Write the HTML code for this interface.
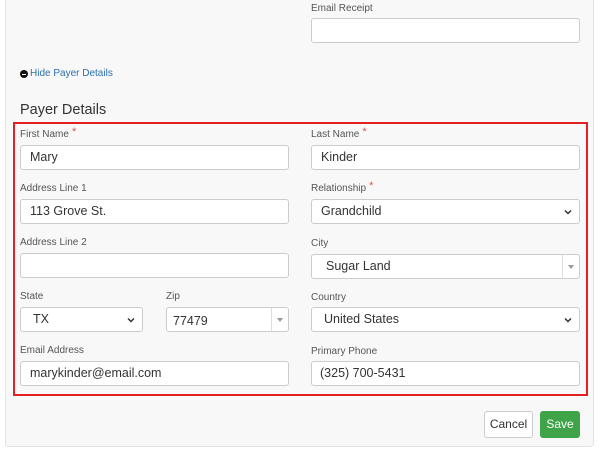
<!DOCTYPE html>
<html><head><style>
body{margin:0;width:600px;height:457px;background:#fff;position:relative;overflow:hidden;font-family:"Liberation Sans",sans-serif;}
.panel{position:absolute;left:5px;top:-2px;width:589px;height:449px;background:#f8f8f8;border:1px solid #e3e3e3;border-radius:3px;box-sizing:border-box;}
.a{position:absolute;}
.lbl{position:absolute;font-size:10px;color:#555;}
.st{color:#d9534f;font-size:11px;vertical-align:top;position:relative;top:-3px;}
.in{position:absolute;height:25px;background:#fff;border:1px solid #ccc;border-radius:3px;box-sizing:border-box;font-size:12.5px;color:#333;line-height:23px;padding-left:9px;}
.chev{position:absolute;right:6px;top:7px;width:10px;height:10px;}
.sel2 .bar{position:absolute;right:16px;top:0;bottom:0;border-left:1px solid #ddd;}
.sel2 .tri{position:absolute;right:5px;top:10px;width:0;height:0;border-left:3px solid transparent;border-right:3px solid transparent;border-top:4px solid #999;}
</style></head><body>
<div class="panel"></div>
<div class="lbl" style="left:311px;top:3px">Email Receipt</div>
<div class="in" style="left:311px;top:18px;width:269px;"></div>
<div class="a" style="left:20px;top:70px;width:8px;height:8px;border-radius:50%;background:#111"><div style="position:absolute;left:2px;top:3.5px;width:4px;height:1px;background:#fff"></div></div>
<div class="a" style="left:30px;top:68px;font-size:10px;color:#2a6fb0">Hide Payer Details</div>
<div class="a" style="left:20px;top:102px;font-size:14.5px;color:#333">Payer Details</div>
<div class="a" style="left:13px;top:122px;width:575px;height:274px;border:2px solid #e31e24;box-sizing:border-box"></div>

<div class="lbl" style="left:20px;top:129px">First Name<span class="st"> *</span></div>
<div class="in" style="left:20px;top:145px;width:269px;">Mary</div>
<div class="lbl" style="left:311px;top:129px">Last Name<span class="st"> *</span></div>
<div class="in" style="left:311px;top:145px;width:269px;">Kinder</div>

<div class="lbl" style="left:20px;top:183px">Address Line 1</div>
<div class="in" style="left:20px;top:199px;width:269px;">113 Grove St.</div>
<div class="lbl" style="left:311px;top:183px">Relationship<span class="st"> *</span></div>
<div class="in" style="left:311px;top:199px;width:269px;">Grandchild<svg class="chev" viewBox="0 0 10 10"><path d="M2 3.5L5 6.5L8 3.5" fill="none" stroke="#333" stroke-width="1.5"/></svg></div>

<div class="lbl" style="left:20px;top:237px">Address Line 2</div>
<div class="in" style="left:20px;top:253px;width:269px;"></div>
<div class="lbl" style="left:311px;top:238px">City</div>
<div class="in sel2" style="left:311px;top:254px;width:269px;padding-left:14px">Sugar Land<div class="bar"></div><div class="tri"></div></div>

<div class="lbl" style="left:20px;top:291px">State</div>
<div class="in" style="left:20px;top:307px;width:123px;padding-left:12px">TX<svg class="chev" viewBox="0 0 10 10"><path d="M2 3.5L5 6.5L8 3.5" fill="none" stroke="#333" stroke-width="1.5"/></svg></div>
<div class="lbl" style="left:166px;top:291px">Zip</div>
<div class="in sel2" style="left:166px;top:307px;width:123px;padding-left:6px;line-height:26px">77479<div class="bar"></div><div class="tri"></div></div>
<div class="lbl" style="left:311px;top:292px">Country</div>
<div class="in" style="left:311px;top:307px;width:269px;padding-left:12px">United States<svg class="chev" viewBox="0 0 10 10"><path d="M2 3.5L5 6.5L8 3.5" fill="none" stroke="#333" stroke-width="1.5"/></svg></div>

<div class="lbl" style="left:20px;top:345px">Email Address</div>
<div class="in" style="left:20px;top:361px;width:269px;">marykinder@email.com</div>
<div class="lbl" style="left:311px;top:346px">Primary Phone</div>
<div class="in" style="left:311px;top:361px;width:269px;padding-left:8px">(325) 700-5431</div>

<div class="a" style="left:484px;top:411px;width:49px;height:27px;border:1px solid #ccc;border-radius:3px;background:#fff;box-sizing:border-box;font-size:12px;color:#333;text-align:center;line-height:25px">Cancel</div>
<div class="a" style="left:540px;top:411px;width:40px;height:27px;border-radius:3px;background:#3fa447;font-size:12px;color:#fff;text-align:center;line-height:27px">Save</div>
</body></html>
